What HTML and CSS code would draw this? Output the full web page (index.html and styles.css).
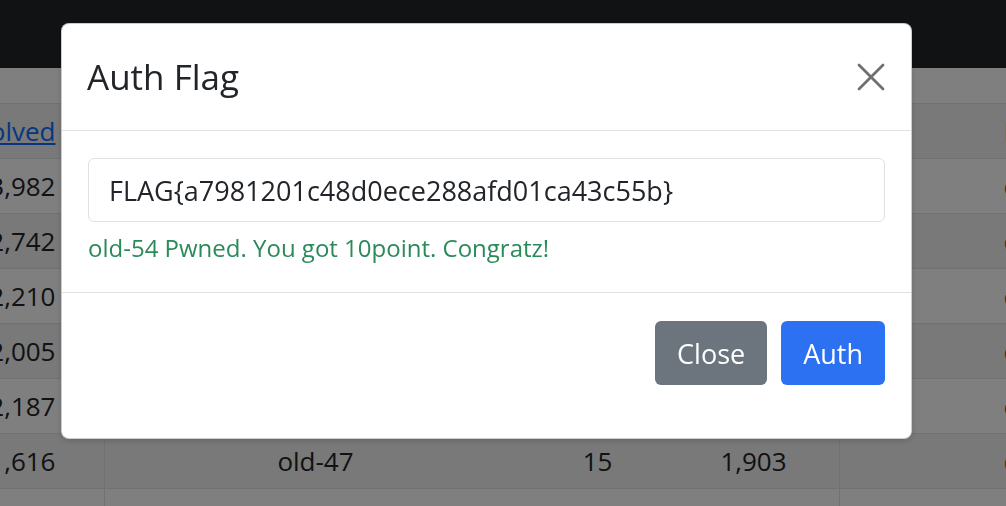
FILE: index.html
```html
<!DOCTYPE html>
<html lang="en">
<head>
    <meta charset="UTF-8">
    <meta name="viewport" content="width=device-width, initial-scale=1.0">
    <title>Challenges</title>
    <link rel="stylesheet" href="styles.css">
</head>
<body>
    <nav class="navbar"></nav>

    <!-- Ranking table behind the modal -->
    <main class="board">
        <table class="rank">
            <thead>
                <tr>
                    <th class="col-solved"><a href="#">Solved</a></th>
                    <th class="col-name">Challenge</th>
                    <th class="col-point">Point</th>
                    <th class="col-solvers">Solvers</th>
                    <th class="col-extra">Date</th>
                </tr>
            </thead>
            <tbody>
                <tr><td class="col-solved">3,982</td><td class="col-name">old-50</td><td>10</td><td class="col-solvers">3,982</td><td class="col-extra">c</td></tr>
                <tr><td class="col-solved">2,742</td><td class="col-name">old-51</td><td>10</td><td class="col-solvers">2,742</td><td class="col-extra">c</td></tr>
                <tr><td class="col-solved">2,210</td><td class="col-name">old-52</td><td>10</td><td class="col-solvers">2,210</td><td class="col-extra">c</td></tr>
                <tr><td class="col-solved">2,005</td><td class="col-name">old-53</td><td>10</td><td class="col-solvers">2,005</td><td class="col-extra">c</td></tr>
                <tr><td class="col-solved">2,187</td><td class="col-name">old-54</td><td>10</td><td class="col-solvers">2,187</td><td class="col-extra">c</td></tr>
                <tr><td class="col-solved">1,616</td><td class="col-name">old-47</td><td>15</td><td class="col-solvers">1,903</td><td class="col-extra">c</td></tr>
                <tr><td class="col-solved">1,600</td><td class="col-name">old-38</td><td>20</td><td class="col-solvers">2,005</td><td class="col-extra">c</td></tr>
            </tbody>
        </table>
    </main>

    <div class="backdrop"></div>

    <!-- Auth modal -->
    <div class="modal">
        <div class="modal-content">
            <div class="modal-header">
                <h5 class="modal-title">Auth Flag</h5>
                <button class="btn-close" type="button" aria-label="Close">
                    <svg width="30" height="30" viewBox="0 0 30 30">
                        <path d="M3 3 L27 27 M27 3 L3 27" stroke="#707070" stroke-width="2.8" stroke-linecap="round" fill="none"/>
                    </svg>
                </button>
            </div>
            <div class="modal-body">
                <input class="form-control" type="text" value="FLAG{a7981201c48d0ece288afd01ca43c55b}">
                <div class="valid-feedback">old-54 Pwned. You got 10point. Congratz!</div>
            </div>
            <div class="modal-footer">
                <button class="btn btn-secondary" type="button">Close</button>
                <button class="btn btn-primary" type="button">Auth</button>
            </div>
        </div>
    </div>
</body>
</html>
```

FILE: styles.css
```css
body {
    font-family: "Open Sans", "Noto Sans", sans-serif;
    background-color: #fff;
    color: #212529;
    margin: 0;
    padding: 0;
    width: 1006px;
    height: 506px;
    overflow: hidden;
}
.navbar {
    height: 68px;
    background-color: #212529;
}
.board {
    padding-top: 35px;
}
.rank {
    margin-left: -58px;
    width: 1300px;
    table-layout: fixed;
    border-collapse: collapse;
    font-size: 26px;
}
.rank th, .rank td {
    padding: 10px 0;
    line-height: 34px;
    font-weight: 400;
    text-align: center;
    border-bottom: 1px solid #dee2e6;
    white-space: nowrap;
}
.rank thead tr {
    background-color: #f2f2f2;
    border-top: 1px solid #dee2e6;
}
.rank tbody tr:nth-child(even) {
    background-color: #f2f2f2;
}
.rank .col-solved {
    width: 162px;
    text-align: right;
    padding-right: 48px;
    box-sizing: border-box;
    border-right: 1px solid #dee2e6;
}
.rank .col-solved a {
    color: #0d6efd;
}
.rank .col-name {
    width: 422px;
}
.rank .col-point {
    width: 142px;
}
.rank .col-solvers {
    width: 170px;
    border-right: 1px solid #dee2e6;
}
.rank .col-extra {
    text-align: left;
    padding-left: 164px;
    color: #7a6a3c;
}
.backdrop {
    position: fixed;
    top: 0;
    left: 0;
    right: 0;
    bottom: 0;
    background-color: rgba(0, 0, 0, 0.5);
}
.modal {
    position: fixed;
    top: 0;
    left: 0;
    right: 0;
    bottom: 0;
}
.modal-content {
    margin: 23px 0 0 61px;
    width: 851px;
    box-sizing: border-box;
    background-color: #fff;
    border: 1px solid rgba(0, 0, 0, 0.2);
    border-radius: 8px;
    box-shadow: 0 2px 6px rgba(0, 0, 0, 0.15);
}
.modal-header {
    height: 107px;
    box-sizing: border-box;
    display: flex;
    align-items: center;
    justify-content: space-between;
    padding: 0 25px 0 25px;
    border-bottom: 1px solid #dee2e6;
}
.modal-title {
    margin: 0;
    font-size: 35px;
    font-weight: 400;
    line-height: 1.2;
    color: #212529;
}
.btn-close {
    border: 0;
    background: none;
    padding: 0;
    width: 30px;
    height: 30px;
    display: flex;
}
.modal-body {
    padding: 27px 26px 26px;
}
.form-control {
    display: block;
    width: 100%;
    height: 64px;
    box-sizing: border-box;
    padding: 0 20px;
    font-family: "Open Sans", "Noto Sans", sans-serif;
    font-size: 27px;
    color: #212529;
    border: 1px solid #dee2e6;
    border-radius: 6px;
    outline: none;
}
.valid-feedback {
    margin-top: 8px;
    font-size: 24px;
    line-height: 36px;
    color: #2b8a5a;
}
.modal-footer {
    display: flex;
    justify-content: flex-end;
    gap: 14px;
    padding: 28px 26px 53px;
    border-top: 1px solid #dee2e6;
}
.btn {
    height: 64px;
    padding: 0 22px;
    border: 0;
    border-radius: 6px;
    font-family: "Open Sans", "Noto Sans", sans-serif;
    font-size: 27px;
    color: #fff;
}
.btn-secondary {
    background-color: #6c757d;
}
.btn-primary {
    background-color: #2c71f1;
}
```
